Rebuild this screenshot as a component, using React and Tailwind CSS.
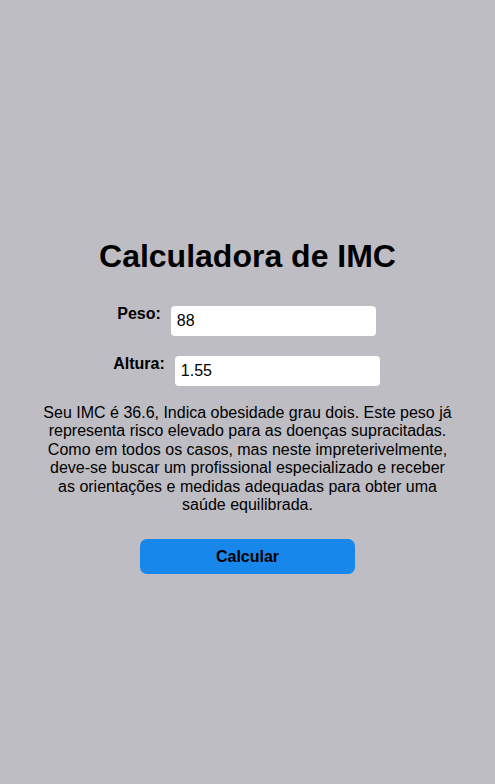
import React, { useState } from 'react';

function imcMessage(peso, altura) {
  const imc = peso / (altura * altura);
  return `Seu IMC é ${imc.toFixed(1)}, Indica obesidade grau dois. Este peso já representa risco elevado para as doenças supracitadas. Como em todos os casos, mas neste impreterivelmente, deve-se buscar um profissional especializado e receber as orientações e medidas adequadas para obter uma saúde equilibrada.`;
}

export default function App() {
  const [peso, setPeso] = useState('88');
  const [altura, setAltura] = useState('1.55');
  const [resultado, setResultado] = useState(imcMessage(88, 1.55));

  function calcular() {
    setResultado(imcMessage(parseFloat(peso), parseFloat(altura)));
  }

  return (
    <div className="min-h-screen bg-[#bebdc3] flex flex-col items-center pt-[238px] font-['Liberation_Sans',Arial,sans-serif] text-black">
      <h1 className="text-[32px] leading-[37px] font-bold">Calculadora de IMC</h1>

      <div className="mt-[31px] mr-[2px] flex items-start gap-[10px]">
        <label className="font-bold text-base leading-[18px] mt-[-1px]">Peso:</label>
        <input
          value={peso}
          onChange={(e) => setPeso(e.target.value)}
          className="w-[205px] h-[30px] bg-white rounded-[4px] px-[6px] text-base outline-none"
        />
      </div>

      <div className="mt-[20px] mr-[2px] flex items-start gap-[10px]">
        <label className="font-bold text-base leading-[18px] mt-[-1px]">Altura:</label>
        <input
          value={altura}
          onChange={(e) => setAltura(e.target.value)}
          className="w-[205px] h-[30px] bg-white rounded-[4px] px-[6px] text-base outline-none"
        />
      </div>

      <p className="mt-[18px] w-[416px] text-center text-base leading-[18.4px]">{resultado}</p>

      <button
        onClick={calcular}
        className="mt-[25px] w-[215px] h-[35px] bg-[#1787eb] rounded-[7px] font-bold text-base"
      >
        Calcular
      </button>
    </div>
  );
}
